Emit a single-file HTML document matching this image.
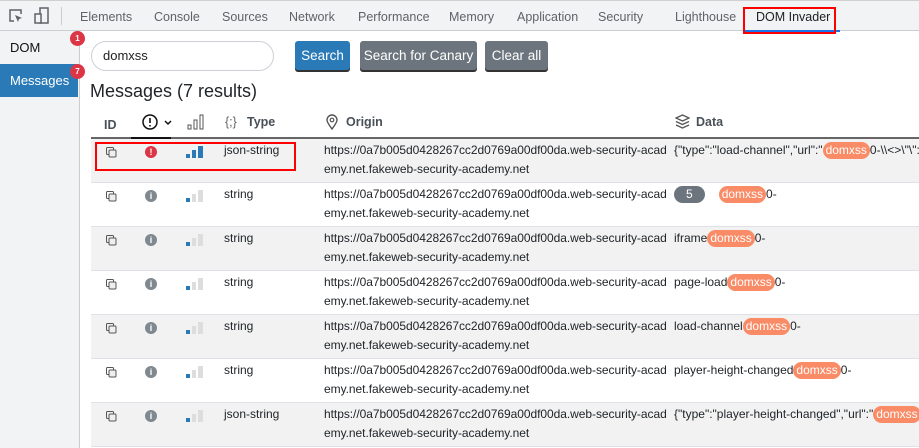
<!DOCTYPE html>
<html><head><meta charset="utf-8"><style>
*{box-sizing:border-box;margin:0;padding:0}
body{width:919px;height:448px;overflow:hidden;background:#fff;font-family:"Liberation Sans",sans-serif;color:#202124;position:relative;font-size:12px}
.abs{position:absolute}
.tb{left:0;top:0;width:919px;height:31px;background:#f1f3f4;border-bottom:1px solid #cbcdd1;border-top:1px solid #d0d0d0}
.tab{position:absolute;top:9px;font-size:12.5px;color:#5f6368}
.side{left:0;top:31px;width:80px;height:417px;background:#f1f3f4;border-right:1px solid #ccc}
.badge{position:absolute;width:15px;height:15px;border-radius:50%;background:#dc3545;color:#fff;font-size:8px;font-weight:bold;text-align:center;line-height:15px}
.btn{position:absolute;top:41px;height:29px;border-radius:3px;color:#fff;font-size:13.5px;line-height:29px;text-align:center;box-shadow:0 2px 0 #333}
.row{position:absolute;left:91px;width:828px;height:44px;border-bottom:1px solid #dee2e6}
.g{background:#f2f2f2}
.c{position:absolute;top:6px;line-height:19px;font-size:12px;color:#212529;white-space:nowrap}
.o{letter-spacing:-0.05px}
.p{background:#f98b66;color:#fff;border-radius:9px;padding:0 3px;display:inline-block;line-height:17px}
.n{background:#6c757d;color:#fff;border-radius:9px;padding:0 12px;display:inline-block;line-height:17px;margin-right:14px}
.hd{position:absolute;top:115px;font-size:12.5px;font-weight:bold;color:#495057}
</style></head><body>
<div class="abs tb">
<svg class="abs" style="left:8px;top:7px" width="16" height="16" viewBox="0 0 16 16"><path d="M6 13H2V2h11v4" fill="none" stroke="#5f6368" stroke-width="1.5"/><path d="M7 7l7 3-3 1-1 3z" fill="#5f6368"/></svg>
<svg class="abs" style="left:34px;top:6px" width="16" height="18" viewBox="0 0 16 18"><rect x="6" y="1" width="8" height="15" fill="none" stroke="#5f6368" stroke-width="1.5"/><rect x="1" y="7" width="6" height="9" fill="#f1f3f4" stroke="#5f6368" stroke-width="1.5"/></svg>
<div class="abs" style="left:61px;top:6px;width:1px;height:18px;background:#ccc"></div>
<span class="tab" style="left:80px">Elements</span>
<span class="tab" style="left:154px">Console</span>
<span class="tab" style="left:222px">Sources</span>
<span class="tab" style="left:289px">Network</span>
<span class="tab" style="left:358px">Performance</span>
<span class="tab" style="left:449px">Memory</span>
<span class="tab" style="left:517px">Application</span>
<span class="tab" style="left:598px">Security</span>
<span class="tab" style="left:675px">Lighthouse</span>
<span class="tab" style="left:756px;color:#202124">DOM Invader</span>
<div class="abs" style="left:743px;top:29px;width:97px;height:2px;background:#1a73e8"></div>
<div class="abs" style="left:743px;top:6px;width:93px;height:27px;border:2px solid #f00"></div>
</div>
<div class="abs side">
<div class="abs" style="left:10px;top:9px;font-size:13px;color:#111">DOM</div>
<div class="abs" style="left:0;top:33px;width:78px;height:33px;background:#2a7ab8;color:#fff;font-size:13px;padding:9px 0 0 10px">Messages</div>
</div>
<div class="badge" style="left:70px;top:31px">1</div>
<div class="badge" style="left:70px;top:64px">7</div>
<div class="abs" style="left:91px;top:41px;width:183px;height:30px;border:1px solid #ccd0d5;border-radius:15px;padding:6px 0 0 11px;font-size:13px">domxss</div>
<div class="btn" style="left:295px;width:55px;background:#2a7ab8">Search</div>
<div class="btn" style="left:360px;width:117px;background:#6c757d">Search for Canary</div>
<div class="btn" style="left:485px;width:63px;background:#6c757d">Clear all</div>
<div class="abs" style="left:90px;top:81px;font-size:18px;color:#212529">Messages (7 results)</div>
<span class="hd" style="left:104px;top:118px">ID</span>
<svg class="abs" style="left:142px;top:113px" width="32" height="18" viewBox="0 0 32 18"><circle cx="8" cy="9" r="7" fill="none" stroke="#111" stroke-width="1.5"/><path d="M8 5v5M8 12v1.5" stroke="#111" stroke-width="1.6"/><path d="M23 8l3 3 3-3" fill="none" stroke="#111" stroke-width="1.5"/></svg>
<svg class="abs" style="left:187px;top:113px" width="18" height="18" viewBox="0 0 18 18"><rect x="1" y="12" width="3" height="4" fill="none" stroke="#555"/><rect x="7" y="7" width="3" height="9" fill="none" stroke="#555"/><rect x="13" y="2" width="3" height="14" fill="none" stroke="#555"/></svg>
<span class="hd" style="left:225px;color:#666;font-weight:normal">{;}</span><span class="hd" style="left:247px">Type</span>
<svg class="abs" style="left:326px;top:114px" width="12" height="16" viewBox="0 0 12 16"><path d="M6 15C3 11 1 8 1 6a5 5 0 0 1 10 0c0 2-2 5-5 9z" fill="none" stroke="#555" stroke-width="1.4"/><circle cx="6" cy="6" r="1.8" fill="none" stroke="#555" stroke-width="1.2"/></svg>
<span class="hd" style="left:346px">Origin</span>
<svg class="abs" style="left:675px;top:114px" width="15" height="15" viewBox="0 0 15 15"><path d="M7.5 1L14 4 7.5 7 1 4z M1 7.5l6.5 3 6.5-3 M1 11l6.5 3 6.5-3" fill="none" stroke="#555" stroke-width="1.3"/></svg>
<span class="hd" style="left:696px">Data</span>
<div class="abs" style="left:91px;top:137px;width:828px;height:2px;background:#666"></div>
<div class="abs" style="left:131px;top:137px;width:40px;height:2px;background:#111"></div>

<div class="row g" style="top:139px"></div>
<div class="row" style="top:183px"></div>
<div class="row g" style="top:227px"></div>
<div class="row" style="top:271px"></div>
<div class="row g" style="top:315px"></div>
<div class="row" style="top:359px"></div>
<div class="row g" style="top:403px"></div>

<div id="rows"></div>
<script>
var data=[
['json-string',1,'{"type":"load-channel","url":"<span class="p">domxss</span>0-\\\\<>\\"\\":"}'],
['string',0,'<span class="n">5</span><span class="p">domxss</span>0-'],
['string',0,'iframe<span class="p">domxss</span>0-'],
['string',0,'page-load<span class="p">domxss</span>0-'],
['string',0,'load-channel<span class="p">domxss</span>0-'],
['string',0,'player-height-changed<span class="p">domxss</span>0-'],
['json-string',0,'{"type":"player-height-changed","url":"<span class="p">domxss</span>0']];
var h='';
data.forEach(function(d,i){var t=139+i*44;
h+='<svg class="abs" style="left:106px;top:'+(t+8)+'px" width="11" height="11" viewBox="0 0 11 11"><rect x="0.5" y="0.5" width="7" height="7" rx="1" fill="none" stroke="#555"/><rect x="3" y="3" width="7" height="7" rx="1" fill="#eee" stroke="#555"/></svg>';
var red=(i==0);
h+='<div class="abs" style="left:145px;top:'+(t+7)+'px;width:12px;height:12px;border-radius:50%;background:'+(red?'#dc3545':'#808890')+';color:#fff;font-size:9px;font-weight:bold;text-align:center;line-height:12px">'+(red?'!':'i')+'</div>';
var b2=d[1]?'#2a7ab8':'#ddd';
h+='<svg class="abs" style="left:186px;top:'+(t+6)+'px" width="20" height="14"><rect x="0" y="9" width="4" height="4" fill="#2a7ab8"/><rect x="6" y="5" width="4" height="8" fill="'+b2+'"/><rect x="12" y="1" width="5" height="12" fill="'+b2+'"/></svg>';
h+='<div class="c" style="left:224px;top:'+(t+2)+'px">'+d[0]+'</div>';
h+='<div class="c o" style="left:324px;top:'+(t+2)+'px">https://0a7b005d0428267cc2d0769a00df00da.web-security-acad<br>emy.net.fakeweb-security-academy.net</div>';
h+='<div class="c" style="left:674px;top:'+(t+2)+'px">'+d[2]+'</div>';
});
document.getElementById('rows').innerHTML=h;
</script>
<div class="abs" style="left:95px;top:142px;width:201px;height:29px;border:2px solid #f00"></div>
</body></html>
